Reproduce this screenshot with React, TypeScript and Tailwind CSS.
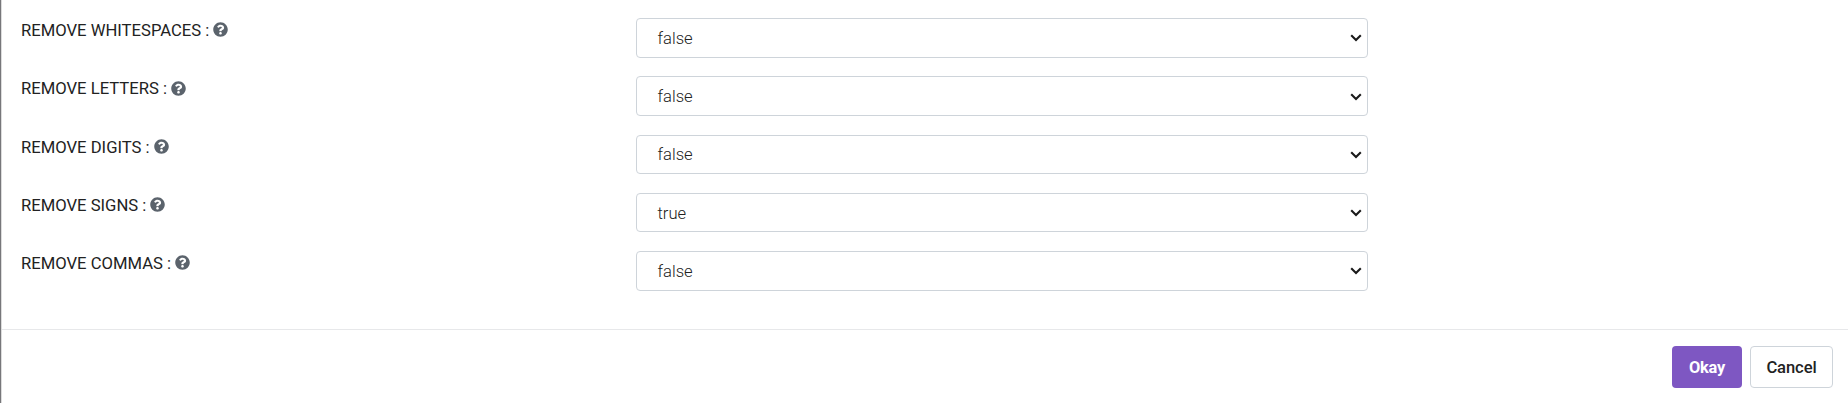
import { FaQuestionCircle } from "react-icons/fa";

const rows = [
  { label: "REMOVE WHITESPACES :", value: "false" },
  { label: "REMOVE LETTERS :", value: "false" },
  { label: "REMOVE DIGITS :", value: "false" },
  { label: "REMOVE SIGNS :", value: "true" },
  { label: "REMOVE COMMAS :", value: "false" },
];

function Chevron() {
  return (
    <svg width="12" height="8" viewBox="0 0 12 8" fill="none" stroke="#1a1a1a" strokeWidth="2.1">
      <path d="M1.2 1.3 6 6l4.8-4.7" />
    </svg>
  );
}

export default function App() {
  return (
    <div className="flex h-[403px] overflow-hidden border-l border-[#77777a] bg-white font-['Roboto',sans-serif] text-[#222222]">
      <div className="w-px shrink-0 bg-[#dcdcdc]" />
      <div className="min-w-0 grow">
        <div className="flex h-[330px] flex-col gap-[18.65px] border-b border-[#e7e8ea] pl-[19px] pt-[18.2px]">
          {rows.map((row) => (
            <div key={row.label} className="flex h-[39.6px] w-[1347px] shrink-0">
              <div className="flex h-6 w-[615px] items-center gap-1 text-[16.65px] leading-6">
                <span className="pt-[1.9px]">{row.label}</span>
                <FaQuestionCircle className="mb-[0.4px] size-[15px] text-[#5b636c]" />
              </div>
              <button className="flex h-[39.6px] w-[732px] items-center justify-between rounded-[4px] border border-[#ced4da] pl-[20.5px] pr-[5px] pt-px text-[16.6px] font-light leading-6">
                <span className="pt-[0.8px]">{row.value}</span>
                <Chevron />
              </button>
            </div>
          ))}
        </div>
        <div className="flex justify-end gap-2 pr-[15px] pt-4">
          <button className="h-[42px] w-[70px] rounded-[4px] bg-[#7e57c2] pt-[3px] text-[16.4px] font-bold tracking-[-0.2px] text-white">Okay</button>
          <button className="h-[42px] w-[83px] rounded-[4px] border border-[#ced4da] pt-[3px] text-[16.6px] font-medium tracking-[-0.1px]">Cancel</button>
        </div>
      </div>
    </div>
  );
}
